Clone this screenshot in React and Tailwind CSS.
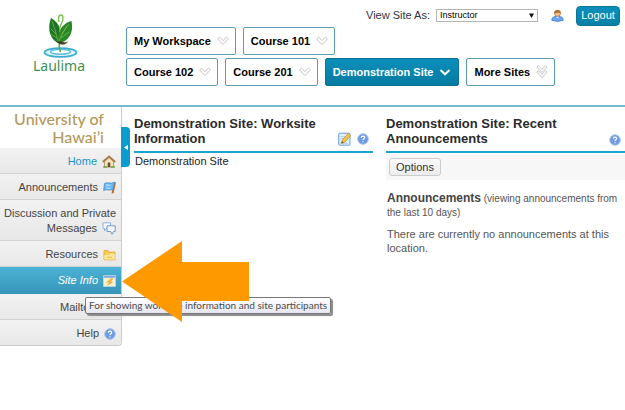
import React, { useState } from 'react';

const tabRows = [
  [{ name: 'My Workspace' }, { name: 'Course 101' }],
  [
    { name: 'Course 102' },
    { name: 'Course 201' },
    { name: 'Demonstration Site', active: true },
    { name: 'More Sites', more: true }
  ]
];

const Logo = () => (
  <svg width="50" height="45" viewBox="0 0 50 45" aria-hidden="true">
    <ellipse cx="26.5" cy="39.5" rx="16" ry="4.3" fill="#e3f5fa" stroke="#3aaed0" strokeWidth="1.8" />
    <ellipse cx="26.5" cy="38.8" rx="10" ry="2.4" fill="#fff" stroke="#58bcd9" strokeWidth="1.4" />
    <path d="M25.5 28 Q24.5 34 26.5 39" fill="none" stroke="#5cae3c" strokeWidth="1.6" />
    <path d="M17 5 C14 13 14 25 24 30 C29 22 27 10 17 5Z" fill="#1f7527" />
    <path d="M37.5 8 C28 10 22 20 24.5 30 C35 29 40 19 37.5 8Z" fill="#2b8729" />
    <path d="M26 19 C24 13 30 9 29 4 C28 0 23 2 25 9" fill="none" stroke="#74bb45" strokeWidth="1.3" />
    <path d="M23 29 C27 27.5 30 31 33.5 29 C30 32.5 26 31.5 23 29Z" fill="#4c3926" stroke="#3f4a22" strokeWidth=".6" />
    <path d="M18 8 Q22 19 24 28 M35 11 Q28 19 25 28 M17 16 L22 21 M17 21 L23 25 M33 13 L28 21 M35 19 L27 25" fill="none" stroke="#7dc243" strokeWidth=".7" />
  </svg>
);

const Chevron = ({ active, more }) => {
  if (active) {
    return (
      <svg width="12" height="12" viewBox="0 0 12 12" aria-hidden="true">
        <path d="M1.5 4 L6 8.3 L10.5 4" fill="none" stroke="#fff" strokeWidth="2" />
      </svg>
    );
  }
  return (
    <svg width="12" height="14" viewBox="0 0 12 14" aria-hidden="true">
      <g fill="#fff" stroke="#bdbdbd" strokeWidth=".9">
        {more && <path d="M.8 2 L2.3 .7 L6 4.3 L9.7 .7 L11.2 2 L6 7.4Z" />}
        {more && <path d="M.8 7 L2.3 5.7 L6 9.3 L9.7 5.7 L11.2 7 L6 12.8Z" />}
        {!more && <path d="M.6 4.8 L2.5 3 L6 6.6 L9.5 3 L11.4 4.8 L6 10.6Z" />}
      </g>
    </svg>
  );
};

const HelpIcon = () => (
  <svg width="12" height="12" viewBox="0 0 12 12" aria-hidden="true">
    <circle cx="6" cy="6" r="5.3" fill="#6f9be0" stroke="#a9c3ec" />
    <path d="M4.3 4.8 C4.3 2.6 7.8 2.6 7.7 4.6 C7.7 5.8 6 5.7 6 7.1 M6 8.2 V9.3" fill="none" stroke="#fff" strokeWidth="1.2" />
  </svg>
);

const HomeIcon = () => (
  <svg width="14" height="13" viewBox="0 0 14 13" aria-hidden="true">
    <path d="M2.5 6.5 L7 2.5 L11.5 6.5 V12 H2.5Z" fill="#f5e3bd" stroke="#a98958" strokeWidth=".8" />
    <path d="M.8 7 L7 1.4 L13.2 7" fill="none" stroke="#a87a48" strokeWidth="1.8" />
    <rect x="5.7" y="7.5" width="2.6" height="4.6" fill="#6c5138" />
    <path d="M1.2 12 H5 M9 12 H13" stroke="#6da53e" strokeWidth="1.3" />
  </svg>
);

const FlagIcon = () => (
  <svg width="13" height="13" viewBox="0 0 13 13" aria-hidden="true">
    <path d="M12 1.2 L9.5 12.4" stroke="#b0723a" strokeWidth="2" />
    <path d="M1.5 2.5 C4 .5 7 3.5 11.5 1.2 L9.8 8.5 C6 10 4 7.5 .6 9.5Z" fill="#6cb8f0" stroke="#3f86cb" strokeWidth=".7" />
    <path d="M3 3.8 Q5 4.6 7.5 4 M3 7 Q5 7.2 7.5 7.5" fill="none" stroke="#c5e7ff" strokeWidth="1.2" />
  </svg>
);

const ChatIcon = () => (
  <svg width="14" height="13" viewBox="0 0 14 13" aria-hidden="true">
    <path d="M1 .8 H8.5 V6.5 H4.2 L2.5 8.8 V6.5 H1Z" fill="#f5faff" stroke="#8fb0d8" />
    <path d="M5 3.8 H13.2 V9.5 H11.5 L10 12.3 L8.6 9.5 H5Z" fill="#f5faff" stroke="#6f96c9" />
  </svg>
);

const FolderIcon = () => (
  <svg width="13" height="12" viewBox="0 0 13 12" aria-hidden="true">
    <path d="M1 10.8 V1.6 H5 L6 3 H12 V10.8Z" fill="#f9cc58" stroke="#e3a52d" strokeWidth=".8" />
    <path d="M1.3 10.5 V6 H6 L7.2 4.8 H11.8 V10.5Z" fill="#fde7a0" />
    <path d="M4 8.2 H9" stroke="#eab545" />
  </svg>
);

const SiteInfoIcon = () => (
  <svg width="13" height="12" viewBox="0 0 13 12" aria-hidden="true">
    <rect x=".7" y=".7" width="11.6" height="10.6" fill="#fff3cf" stroke="#d5dfec" strokeWidth=".8" />
    <rect x=".8" y=".8" width="11.4" height="2" fill="#7ea8e6" />
    <path d="M8 3.2 L3 7.5 H5.8 L4.3 11 L10.5 6.7 H7.8 L10.5 3.2Z" fill="#e9b54c" />
  </svg>
);

const MailIcon = () => (
  <svg width="13" height="12" viewBox="0 0 13 12" aria-hidden="true">
    <path d="M1 2.5 H12 V10 H1Z M1 2.5 L6.5 7 L12 2.5" fill="#f4f8fc" stroke="#8397b3" strokeWidth=".8" />
  </svg>
);

const UserIcon = () => (
  <svg width="13" height="13" viewBox="0 0 13 13" aria-hidden="true">
    <path d="M.8 11.3 C.8 8 3 7.3 6.5 7.3 S12.2 8 12.2 11.3 Q6.5 13.6 .8 11.3Z" fill="#6da6ef" stroke="#3c78cd" strokeWidth=".8" />
    <path d="M5 7.5 L6.5 9.3 L8 7.5Z" fill="#fff" />
    <circle cx="6.5" cy="4.3" r="3" fill="#f2c08d" stroke="#a8662c" strokeWidth=".7" />
    <path d="M3.3 4.6 C2.6 -.3 10.4 -.3 9.7 4.6 C8.5 3.2 6 3.5 3.3 4.6Z" fill="#b0702f" />
  </svg>
);

const EditIcon = () => (
  <svg width="13" height="14" viewBox="0 0 13 14" aria-hidden="true">
    <rect x=".7" y="1.2" width="11.3" height="12" rx="1" fill="#e2effa" stroke="#6aa0d6" />
    <path d="M2.5 4.5 H7 M2.5 6.5 H6 M2.5 11.3 H10" stroke="#a8c8e8" strokeWidth=".8" />
    <path d="M3.4 11.3 L4.3 8 L10.2 1.5 L12.7 3.8 L6.8 10.2Z" fill="#f6c44c" stroke="#b98a2e" strokeWidth=".7" />
    <path d="M3.4 11.3 L4 9.2 L5.5 10.6Z" fill="#3d3d3d" />
  </svg>
);

const tools = [
  { name: 'Home', icon: HomeIcon, color: 'text-[#1a95c8]' },
  { name: 'Announcements', icon: FlagIcon },
  { name: 'Discussion and Private Messages', icon: ChatIcon },
  { name: 'Resources', icon: FolderIcon },
  { name: 'Site Info', icon: SiteInfoIcon, current: true },
  { name: 'Mailtool', icon: MailIcon },
  { name: 'Help', icon: HelpIcon }
];

const SiteTab = ({ tab }) => (
  <a
    href="#"
    className={`flex h-7 items-center gap-[6px] rounded-xs border pl-[7px] text-[11px] font-bold ${
      tab.active
        ? 'border-[#0a7296] bg-linear-to-b from-[#0b8fba] to-[#057ba3] pr-[7px] text-white'
        : 'border-[#5b9db5] bg-white pr-[6px] text-black'
    }`}
  >
    {tab.name}
    <Chevron active={tab.active} more={tab.more} />
  </a>
);

const Header = () => {
  const [role, setRole] = useState('Instructor');

  return (
    <header className="flex border-b-2 border-[#78b9cd]">
      <a href="#" className="flex w-[126px] shrink-0 flex-col items-center pt-[13px] pr-2 font-['Noto_Sans'] text-[14px] leading-4 text-[#3f8f52]">
        <Logo />
        Laulima
      </a>
      <div className="flex-1 pb-[19px]">
        <div className="flex h-[27px] items-center justify-end pt-1 pr-[5px]">
          <label htmlFor="role" className="mr-[6px] text-[11px] text-[#2c3445]">View Site As:</label>
          <div className="relative mr-[13px]">
            <select
              id="role"
              value={role}
              onChange={(e) => setRole(e.target.value)}
              className="block h-[13px] w-[102px] appearance-none border border-[#b5b5b5] bg-white pl-[3px] text-[9px] leading-[11px] text-black"
            >
              <option>Instructor</option>
              <option>Student</option>
            </select>
            <svg className="pointer-events-none absolute top-1 right-1" width="5" height="5" viewBox="0 0 5 5" aria-hidden="true">
              <path d="M0 .5 H5 L2.5 5Z" fill="#111" />
            </svg>
          </div>
          <UserIcon />
          <button className="ml-[12px] h-5 w-11 rounded border border-[#0b7596] bg-linear-to-b from-[#0b90bb] to-[#0680a8] text-[11px] text-white">
            Logout
          </button>
        </div>
        <nav className="flex flex-col gap-[3px]">
          {tabRows.map((row, i) => (
            <div key={i} className="flex gap-[7px]">
              {row.map((tab) => (
                <SiteTab key={tab.name} tab={tab} />
              ))}
            </div>
          ))}
        </nav>
      </div>
    </header>
  );
};

const Sidebar = () => (
  <aside className="relative w-[122px] shrink-0">
    <h1 className="h-[41px] border-r border-[#ccc] pt-[3px] pr-[17px] text-right font-['Lato'] text-[16px] leading-[18px] font-medium text-[#b39a5b]">
      University of Hawai’i
    </h1>
    <ul className="rounded-br border-r border-b border-[#ccc] text-right text-[11px] leading-[15px]">
      {tools.map(({ name, icon: Icon, color, current }) => (
        <li
          key={name}
          className={`relative ${
            current
              ? 'bg-linear-to-b from-[#4bb3d6] to-[#3795b8]'
              : 'border-b border-[#d2d2d2] bg-linear-to-b from-[#f2f2f2] to-[#e8e8e8] last:rounded-br last:border-b-0'
          }`}
        >
          <a
            href="#"
            className={`flex items-end justify-end pt-[6px] pr-[5px] ${
              current ? 'pb-[6px] text-white italic' : 'pb-1'
            } ${color || (current ? '' : 'text-[#444]')}`}
          >
            {name === 'Discussion and Private Messages' ? (
              <span>
                Discussion and Private
                <span className="flex items-center justify-end gap-[5px]">Messages <Icon /></span>
              </span>
            ) : (
              <span className="flex items-center gap-[5px]">{name} <Icon /></span>
            )}
          </a>
          {current && (
            <>
              <span
                role="tooltip"
                className="absolute top-[30px] left-[85px] z-10 rounded-xs border border-[#777] bg-linear-to-b from-white to-[#e6e7f0] px-[3px] font-['Lato'] text-[10px] leading-[15px] whitespace-nowrap text-[#4c4c4c] shadow-[2px_2px_1px_#8a8a8a]"
              >
                For showing worksite information and site participants
              </span>
              <svg className="absolute -top-[26px] left-[122px] z-20" width="127" height="81" viewBox="0 0 127 81" aria-hidden="true">
                <path d="M0 40.5 L60 0 V21 H127 V60 H60 V81Z" fill="#ff9900" />
              </svg>
            </>
          )}
        </li>
      ))}
    </ul>
    <button
      aria-label="Collapse tools"
      className="absolute top-5 left-[121px] flex h-10 w-[9px] items-center justify-center rounded-r bg-[#0a9bcf]"
    >
      <svg width="4" height="5" viewBox="0 0 4 5" aria-hidden="true">
        <path d="M4 0 V5 L0 2.5Z" fill="#fff" />
      </svg>
    </button>
  </aside>
);

const Portlet = ({ title, editable, children }) => (
  <section>
    <div className="flex items-end justify-between border-b-2 border-[#19a3cf] pb-[5px]">
      <h2 className="text-[13px] leading-[15px] font-bold text-[#2b2b2b]">{title}</h2>
      <div className="flex shrink-0 items-center gap-[6px] pr-1">
        {editable && <button aria-label="Edit"><EditIcon /></button>}
        <button aria-label="Help"><HelpIcon /></button>
      </div>
    </div>
    {children}
  </section>
);

const App = () => {
  return (
    <div className="min-h-screen bg-white font-['Liberation_Sans',sans-serif]">
      <Header />
      <div className="flex">
        <Sidebar />
        <main className="grid flex-1 grid-cols-2 items-start gap-[13px] pt-[9px] pl-3">
          <Portlet title="Demonstration Site: Worksite Information" editable>
            <p className="pt-px pl-px text-[11px] leading-[15px] text-[#222]">Demonstration Site</p>
          </Portlet>
          <Portlet title="Demonstration Site: Recent Announcements">
            <div className="mt-px flex bg-[#f7f7f7] py-1 pl-[3px]">
              <button className="h-[18px] rounded-[3px] border border-[#ccc] bg-linear-to-b from-[#fafafa] to-[#ececec] px-[6px] text-[11px] leading-4 text-[#333]">
                Options
              </button>
            </div>
            <div className="pt-[11px] pl-px text-[11px] leading-[14px] text-[#555]">
              <p className="text-[10px]">
                <strong className="text-[12px] text-[#444]">Announcements</strong> (viewing announcements from the last 10 days)
              </p>
              <p className="pt-[7px]">There are currently no announcements at this location.</p>
            </div>
          </Portlet>
        </main>
      </div>
    </div>
  );
};

export default App;
